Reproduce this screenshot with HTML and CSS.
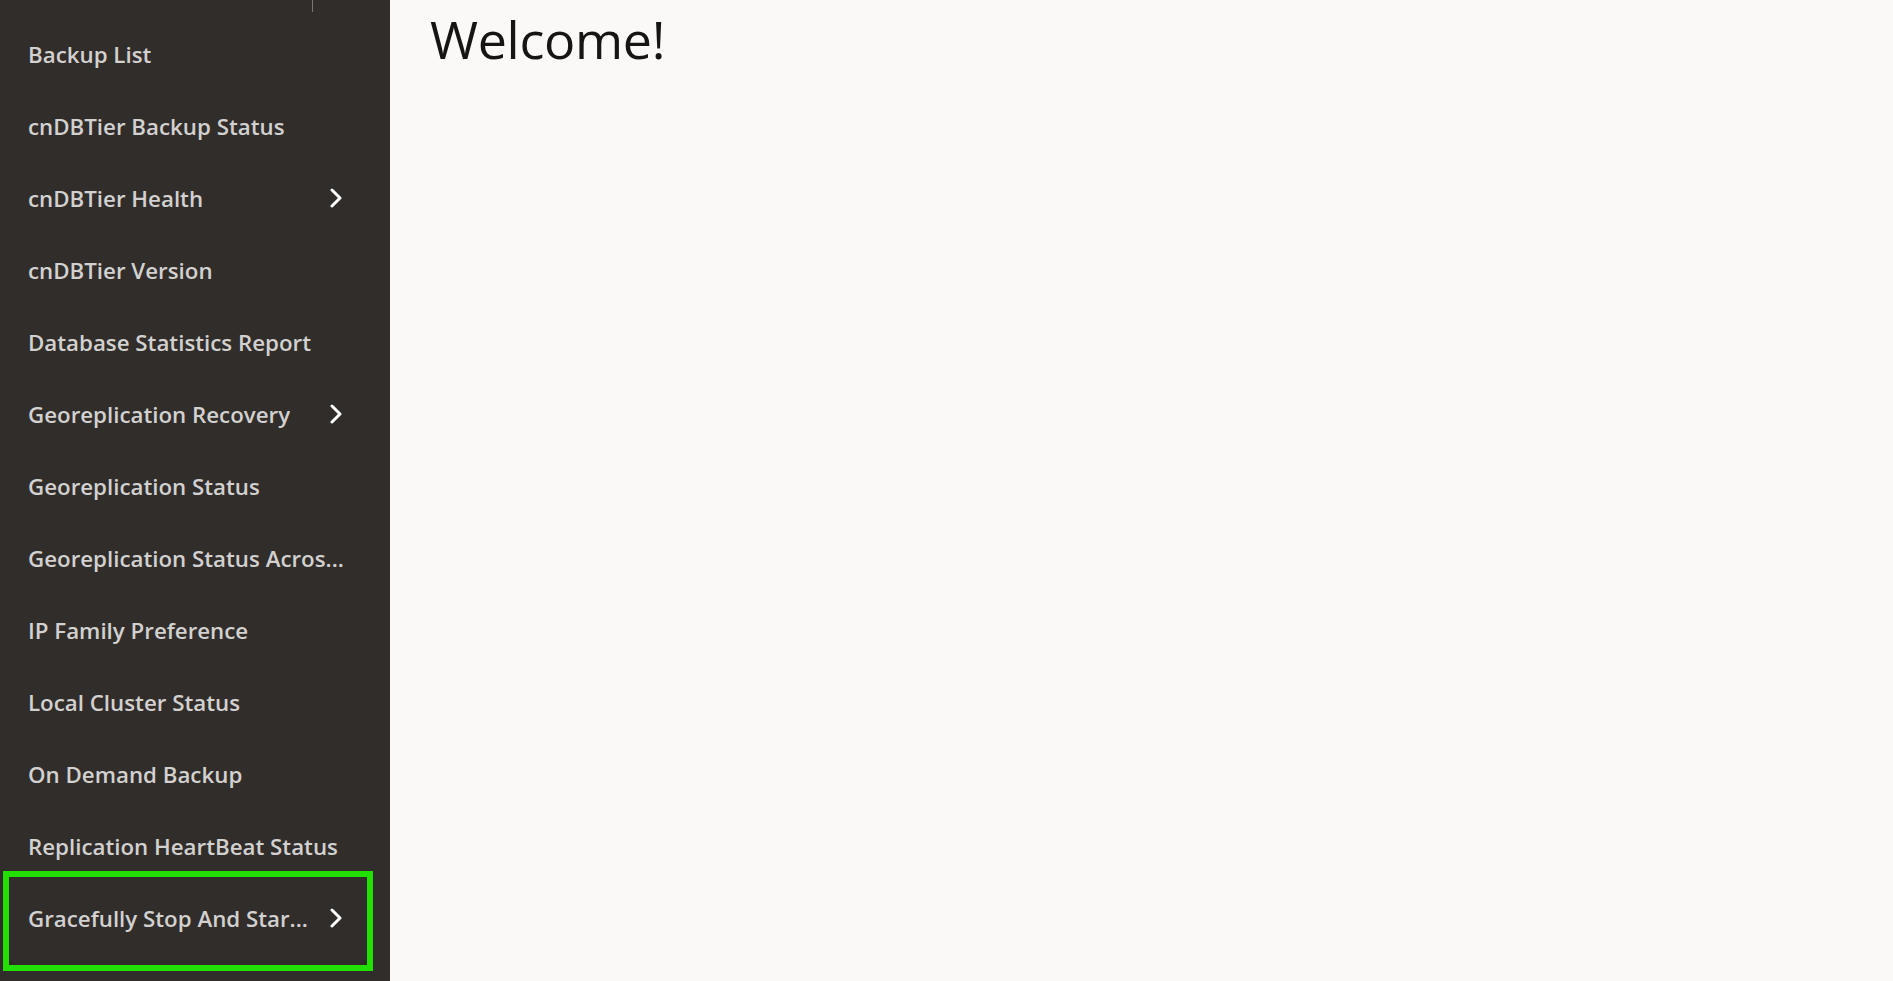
FILE: index.html
```html
<!DOCTYPE html>
<html lang="en">
<head>
<meta charset="utf-8">
<title>cnDBTier</title>
<link rel="stylesheet" href="styles.css">
</head>
<body>
<div class="app">
  <nav class="sidebar">
    <div class="top-stub"></div>
    <ul class="menu">
      <li class="item"><span class="label">Backup List</span></li>
      <li class="item"><span class="label">cnDBTier Backup Status</span></li>
      <li class="item has-sub"><span class="label">cnDBTier Health</span><svg class="chev" viewBox="0 0 12 20"><path d="M2 2 L10 10 L2 18"/></svg></li>
      <li class="item"><span class="label">cnDBTier Version</span></li>
      <li class="item"><span class="label">Database Statistics Report</span></li>
      <li class="item has-sub"><span class="label">Georeplication Recovery</span><svg class="chev" viewBox="0 0 12 20"><path d="M2 2 L10 10 L2 18"/></svg></li>
      <li class="item"><span class="label">Georeplication Status</span></li>
      <li class="item"><span class="label">Georeplication Status Acros...</span></li>
      <li class="item"><span class="label">IP Family Preference</span></li>
      <li class="item"><span class="label">Local Cluster Status</span></li>
      <li class="item"><span class="label">On Demand Backup</span></li>
      <li class="item"><span class="label">Replication HeartBeat Status</span></li>
      <li class="item has-sub highlighted"><span class="label">Gracefully Stop And Star...</span><svg class="chev" viewBox="0 0 12 20"><path d="M2 2 L10 10 L2 18"/></svg><span class="highlight-box"></span></li>
    </ul>
  </nav>
  <main class="content">
    <h1 class="welcome">Welcome!</h1>
  </main>
</div>
</body>
</html>
```

FILE: styles.css
```css
html, body {
  margin: 0;
  padding: 0;
  height: 100%;
  overflow: hidden;
}

body {
  font-family: "Open Sans", "Noto Sans", "Liberation Sans", sans-serif;
  background: #fbf9f8;
}

.app {
  display: flex;
  height: 100vh;
}

.sidebar {
  width: 390px;
  flex: 0 0 390px;
  background: #312d2a;
  display: flex;
  flex-direction: column;
}

.top-stub {
  height: 12px;
  margin-left: 312px;
  width: 1px;
  background: #7a7673;
  margin-bottom: 6px;
}

.menu {
  list-style: none;
  margin: 0;
  padding: 0;
}

.item {
  position: relative;
  height: 72px;
  display: flex;
  align-items: center;
  padding-left: 28px;
  padding-right: 40px;
  color: #d2d1d0;
  font-size: 22.3px;
  font-weight: 600;
  white-space: nowrap;
}

.label {
  overflow: hidden;
  text-overflow: clip;
}

.chev {
  position: absolute;
  left: 330px;
  top: 26px;
  width: 12px;
  height: 20px;
  fill: none;
  stroke: #ffffff;
  stroke-width: 3;
  stroke-linecap: round;
  stroke-linejoin: round;
}

.highlight-box {
  position: absolute;
  left: 3px;
  top: -11px;
  width: 358px;
  height: 88px;
  border: 6px solid #22e000;
  pointer-events: none;
}

.content {
  flex: 1;
  padding-left: 40px;
}

.welcome {
  margin: 0;
  padding-top: 4px;
  font-family: "Open Sans", "Noto Sans", "Liberation Sans", sans-serif;
  font-weight: 400;
  font-size: 52px;
  line-height: 70px;
  color: #161513;
  letter-spacing: -0.3px;
}
```
